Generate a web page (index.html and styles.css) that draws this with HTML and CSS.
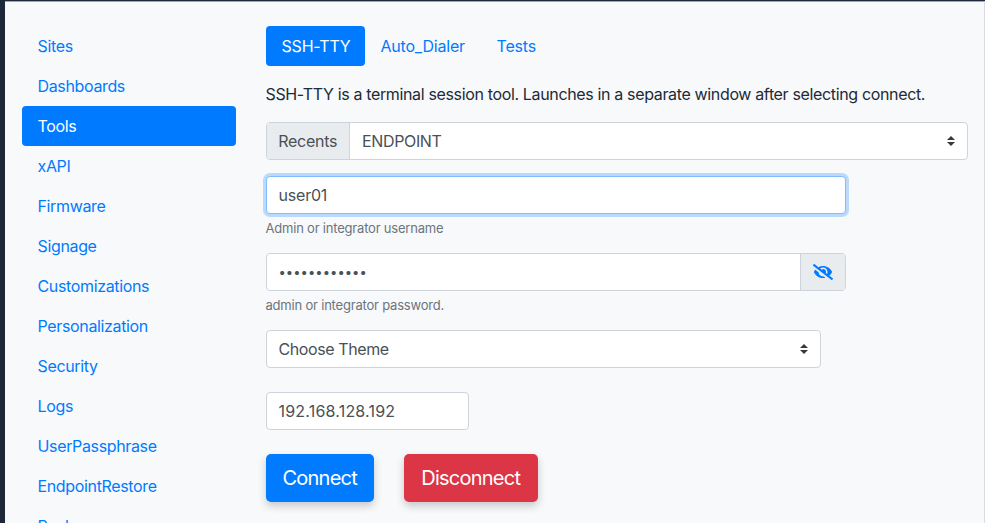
FILE: index.html
```html
<!DOCTYPE html>
<html lang="en">
<head>
<meta charset="utf-8">
<title>SSH-TTY</title>
<link rel="stylesheet" href="styles.css">
</head>
<body>
<div class="panel">
  <nav class="sidebar">
    <a class="pill">Sites</a>
    <a class="pill">Dashboards</a>
    <a class="pill active">Tools</a>
    <a class="pill">xAPI</a>
    <a class="pill">Firmware</a>
    <a class="pill">Signage</a>
    <a class="pill">Customizations</a>
    <a class="pill">Personalization</a>
    <a class="pill">Security</a>
    <a class="pill">Logs</a>
    <a class="pill">UserPassphrase</a>
    <a class="pill">EndpointRestore</a>
    <a class="pill">Backup</a>
  </nav>
  <main class="content">
    <div class="tabs">
      <a class="pill active tab-ssh">SSH-TTY</a>
      <a class="pill tab-dialer">Auto_Dialer</a>
      <a class="pill">Tests</a>
    </div>
    <p class="intro">SSH-TTY is a terminal session tool. Launches in a separate window after selecting connect.</p>
    <div class="field recents">
      <span class="addon label">Recents</span>
      <span class="value endpoint">ENDPOINT</span>
      <svg class="caret" viewBox="0 0 4 5"><path d="M2 0L0 2h4zm0 5L0 3h4z"/></svg>
    </div>
    <div class="field user focused"><span class="value">user01</span></div>
    <small class="help">Admin or integrator username</small>
    <div class="field password">
      <span class="value dots">••••••••••••</span>
      <span class="addon eye"><svg viewBox="0 0 640 512"><path d="M320 400c-75.850 0-137.250-58.710-142.900-133.110L72.200 185.820c-13.790 17.300-26.480 35.590-36.720 55.590a32.350 32.350 0 0 0 0 29.190C89.710 376.410 197.070 448 320 448c26.910 0 52.870-4 77.890-10.460L346 397.390a144.130 144.130 0 0 1-26 2.610zm313.820 58.100l-110.550-85.440a331.250 331.250 0 0 0 81.250-102.070 32.350 32.350 0 0 0 0-29.190C550.290 135.590 442.930 64 320 64a308.150 308.150 0 0 0-147.320 37.700L45.460 3.370A16 16 0 0 0 23 6.180L3.370 31.450A16 16 0 0 0 6.180 53.900l588.360 454.730a16 16 0 0 0 22.460-2.810l19.640-25.270a16 16 0 0 0-2.820-22.450zm-183.720-142l-39.300-30.380A94.750 94.750 0 0 0 416 256a94.760 94.760 0 0 0-121.310-92.210A47.650 47.650 0 0 1 304 192a46.640 46.640 0 0 1-1.540 10l-73.610-56.890A142.310 142.310 0 0 1 320 112a143.920 143.920 0 0 1 144 144c0 21.630-5.290 41.790-13.900 60.110z"/></svg></span>
    </div>
    <small class="help help-password">admin or integrator password.</small>
    <div class="field theme">
      <span class="value">Choose Theme</span>
      <svg class="caret" viewBox="0 0 4 5"><path d="M2 0L0 2h4zm0 5L0 3h4z"/></svg>
    </div>
    <div class="field address"><span class="value ip">192.168.128.192</span></div>
    <div class="actions">
      <button class="btn connect">Connect</button>
      <button class="btn disconnect">Disconnect</button>
    </div>
  </main>
</div>
</body>
</html>
```
FILE: styles.css
```css
* { box-sizing: border-box; }
html { height: 100%; overflow: hidden; background: #1f283a; }
body {
  margin: 0;
  height: 100%;
  overflow: hidden;
  padding: 1px 0 0 5px;
  font: 16px/24px Inter, "Liberation Sans", sans-serif;
  letter-spacing: -0.35px;
  color: #212a37;
}
.panel {
  display: flex;
  height: 522px;
  overflow: hidden;
  padding: 24px 16px 0 17px;
  background: #f8f9fb;
  border-top: 1px solid #a3a5b9;
  border-right: 1px solid #d9dde2;
}
.sidebar { width: 214px; margin-right: 29.5px; }
.pill {
  display: block;
  height: 40px;
  padding: 8px 16px;
  border-radius: 4px;
  color: #007bff;
  white-space: nowrap;
}
.sidebar .pill { padding-left: 15.5px; }
.pill.active { background: #007bff; color: #fff; }
.content { flex: 1; min-width: 0; }
.tabs { display: flex; margin-bottom: 16px; letter-spacing: -0.2px; }
.tab-ssh { width: 99px; }
.tab-dialer { width: 116px; }
.intro { margin: 0 0 16px; height: 24px; white-space: nowrap; }
.field {
  display: flex;
  align-items: center;
  height: 38px;
  background: #fff;
  border: 1px solid #ced4da;
  border-radius: 4px;
  color: #495057;
}
.value { flex: 1; padding-left: 12px; }
.addon {
  display: flex;
  align-items: center;
  justify-content: center;
  height: 36px;
  background: #e9ecef;
}
.label { width: 83.5px; border-right: 1px solid #ced4da; border-radius: 3px 0 0 3px; letter-spacing: -0.25px; }
.caret { width: 8px; height: 10px; margin-right: 12px; fill: #343a40; }
.user { width: 580px; margin-top: 16px; letter-spacing: -0.2px; }
.focused { border-color: #80bdff; box-shadow: 0 0 0 3px rgba(0, 123, 255, .25); }
.help {
  display: block;
  height: 20px;
  margin: 4px 0 15px;
  font-size: 13px;
  line-height: 20px;
  letter-spacing: -0.2px;
  color: #6c757d;
}
.password { width: 580px; }
.dots { font-size: 13px; letter-spacing: 0.05px; }
.eye { width: 45px; border-left: 1px solid #ced4da; border-radius: 0 3px 3px 0; }
.eye svg { width: 20px; height: 16px; fill: #007bff; }
.help-password { margin-bottom: 15px; }
.theme { width: 555px; letter-spacing: -0.4px; }
.address { width: 203px; margin-top: 24px; letter-spacing: 0.2px; }
.actions { display: flex; gap: 30px; margin-top: 24px; }
.btn {
  height: 48px;
  padding: 0;
  border: 0;
  border-radius: 5px;
  font: 20px/48px Inter, "Liberation Sans", sans-serif;
  letter-spacing: -0.75px;
  color: #fff;
  box-shadow: 0 4px 8px rgba(0, 0, 0, .2);
}
.connect { width: 108.5px; background: #007bff; }
.disconnect { width: 133.5px; background: #dc3545; }
```
